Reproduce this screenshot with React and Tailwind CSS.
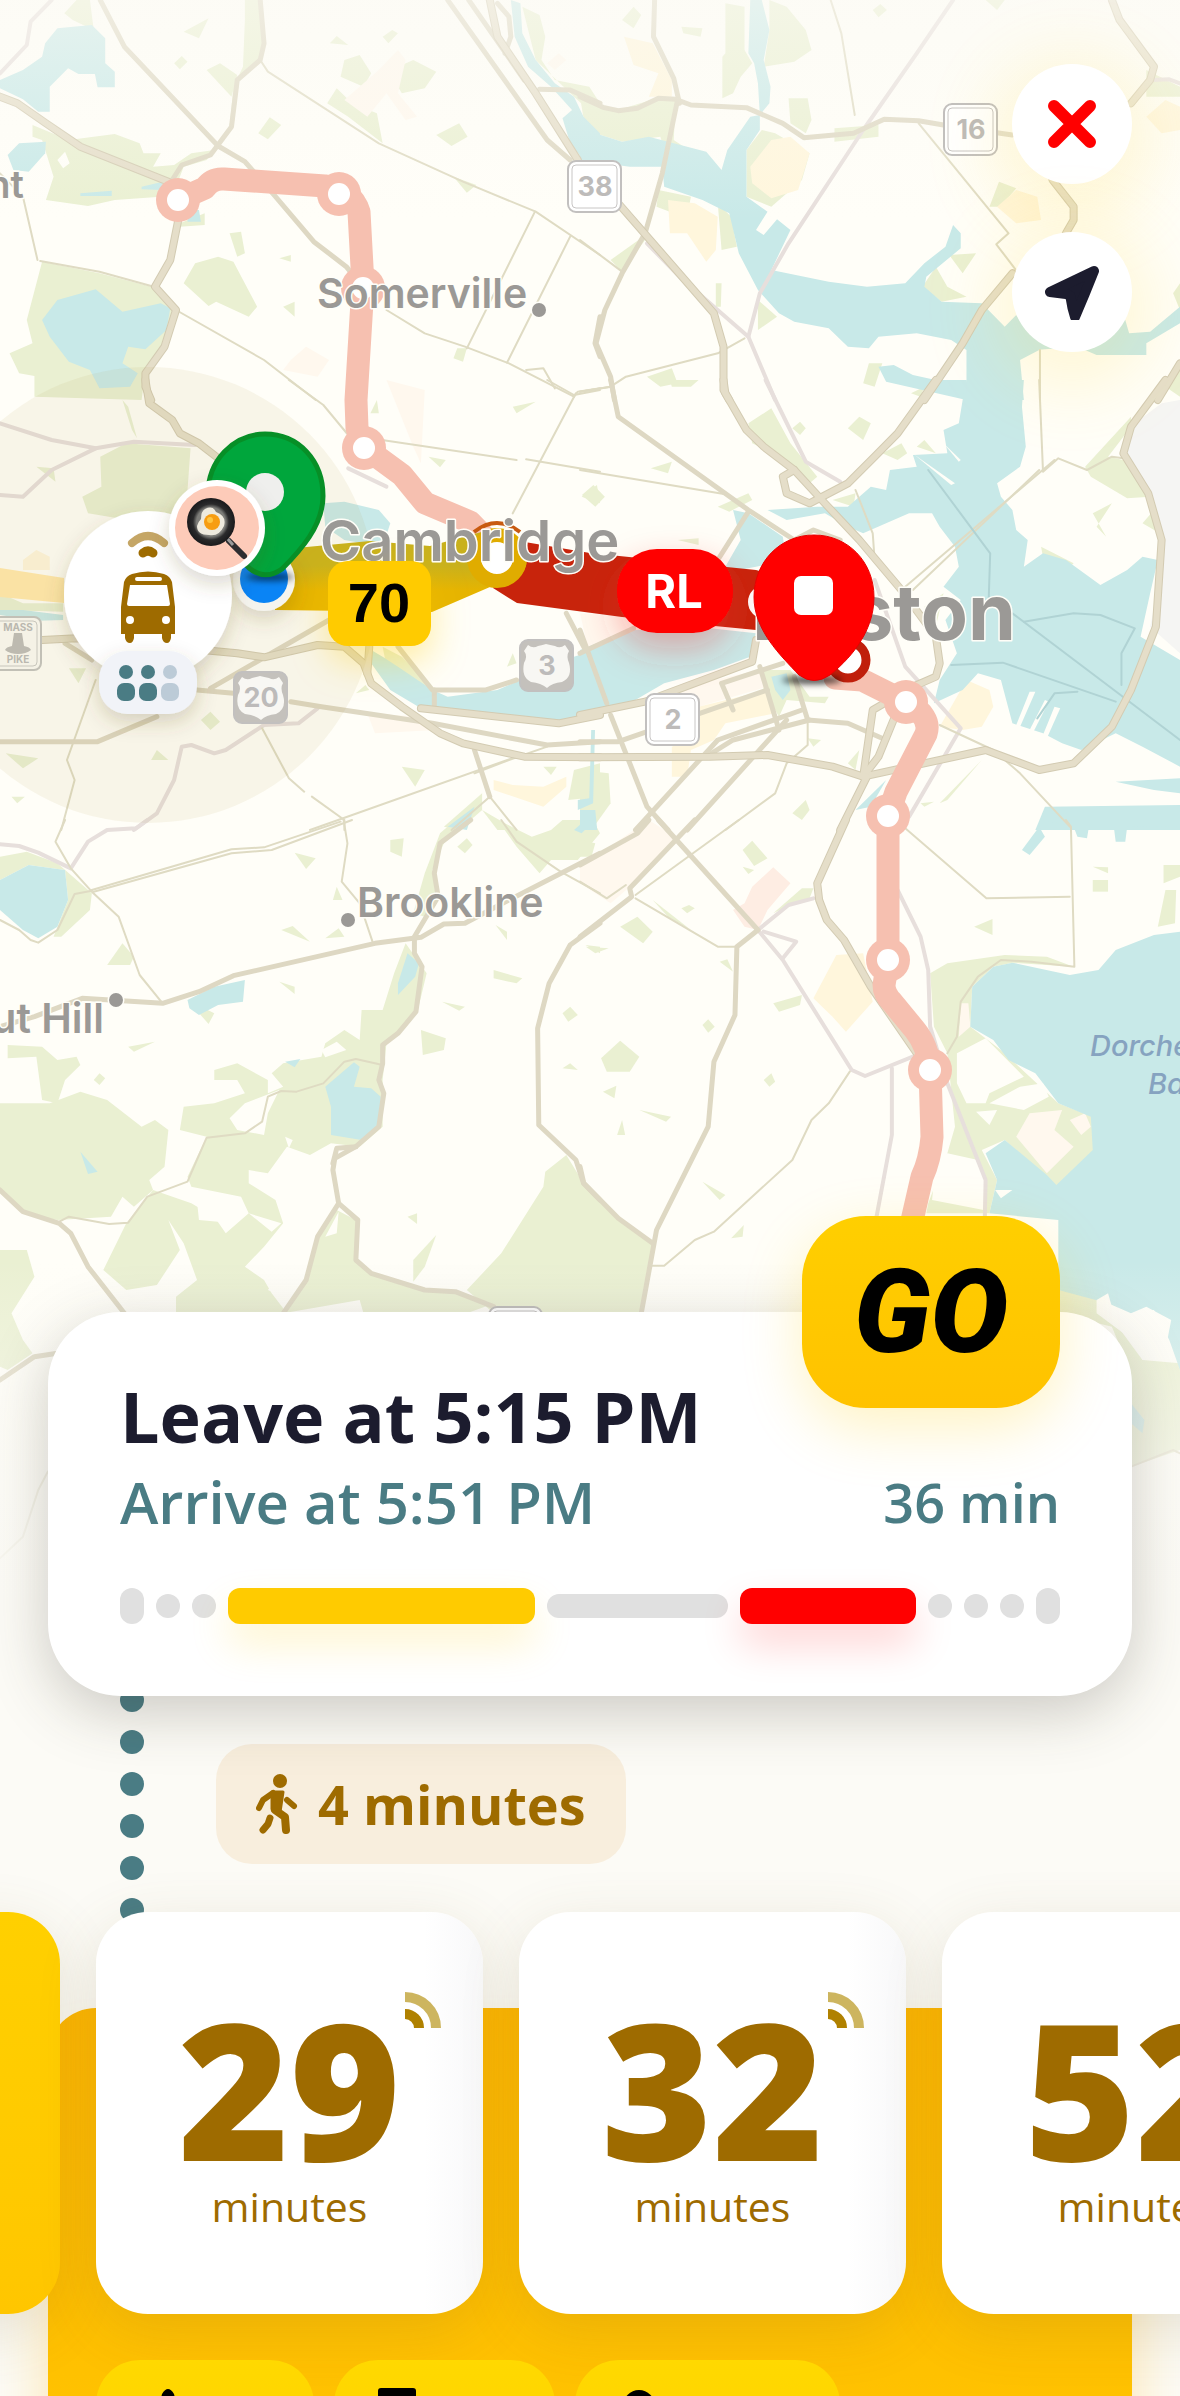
import React from "react";

// Map geometry, split in tiles. Every entry is a list of polygon / polyline points.
const tiles = [
  {
    x: 0,
    y: 0,
    green: [
      "168,40 200,0 235,0 245,90 190,60",
      "85,375 180,420 300,402 365,430 375,460 420,460 400,500 455,495 500,460 560,450 600,380 610,260 635,200 640,60 640,0 680,0 690,130 680,180 625,240 610,380 540,480 480,500 460,560 420,590 300,600 230,618 120,600 140,530 110,420 85,410",
      "480,95 545,55 520,115",
      "455,190 475,168 490,185 470,208",
      "540,210 575,190 620,225 605,290",
      "675,400 705,352 735,375 700,418",
      "855,310 880,265 920,310 985,340 1000,430 910,350",
      "890,230 900,180 940,165 970,220 950,260",
      "862,130 880,108 910,135",
      "1000,110 1025,90 1040,100 1015,130",
      "1035,250 1040,200 1080,180 1140,215 1110,265 1050,280",
      "1140,405 1200,370 1222,410 1180,438",
      "1185,530 1245,555 1220,578",
      "600,700 630,695 640,760 620,770",
      "480,850 510,790 570,770 610,785 672,920 650,950 565,905 545,918",
      "730,775 760,765 760,785",
      "740,920 770,905 770,950",
      "110,785 260,820 395,860 430,900 460,930 420,1060 380,1110 370,1200 90,1190 90,1128 50,1120 25,1060 85,1030 70,960",
      "1365,20 1410,45 1425,110 1415,180 1450,240 1540,260 1568,310 1568,360 1500,290 1400,180",
      "1185,1075 1195,1045 1220,1045 1210,1085",
      "470,670 535,640 535,675 470,680",
    ],
    water: [
      "118,130 150,85 240,75 275,115 275,190 300,215 300,262 255,262 248,222 205,222 178,205 130,260 130,335 100,335 60,298 0,265 0,240 60,210 110,170",
      "20,465 50,430 120,425 118,460 75,515 35,510",
      "110,960 150,900 250,868 320,935 420,910 445,925 435,990 380,1048 335,1040 320,1090 360,1120 340,1160 260,1165 235,1110 180,1085 130,1010",
      "1335,0 1360,10 1365,100 1400,180 1450,250 1500,290 1525,350 1568,400 1568,490 1525,480 1490,430 1470,355 1495,330 1440,260 1380,200 1345,110",
      "210,580 292,572 292,588 210,588",
      "370,560 425,545 425,570 370,568",
      "490,630 520,630 525,665 490,665",
    ],
    land: ["150,480 170,455 182,490 165,505"],
    peach: [
      "760,1080 800,1040 860,1080 830,1130 740,1110",
      "990,210 1040,150 1060,180 1040,280 1090,350 1060,360 1010,280 960,350 900,300",
      "1430,190 1460,160 1480,180 1450,210",
    ],
    major: [
      "0,290 45,310 120,370 210,440 440,545",
      "465,665 445,780 405,860 460,930 430,1040 380,1120 380,1160 395,1200",
      "1280,0 1300,110 1400,280 1510,480",
    ],
    minor: [
      "262,0 325,140 570,438 640,485 720,590 820,725 905,800 940,850",
      "680,0 690,130 680,180 620,240 605,380 550,465 475,495 450,540",
      "1170,0 1430,420 1490,480",
      "1225,0 1370,240",
      "1300,10 1330,50 1335,110 1320,160",
      "1410,268 1490,270 1568,310",
      "1568,950 1555,1030 1568,1070",
    ],
    thin: [
      "680,180 700,215 990,430 1210,545 1400,635 1568,765",
      "1398,635 1220,1045",
      "1490,710 1325,1088",
      "1010,930 1110,1000 1215,1040 1330,1090 1500,1190",
      "1375,1110 1420,1105 1450,1165",
      "460,930 690,1080 825,1200",
      "0,520 60,590 98,780",
      "105,783 260,815 395,858",
      "1568,1165 1510,1175 1500,1190",
    ],
    rail: ["135,0 80,65 70,135 0,220"],
  },
  {
    x: 580,
    y: 0,
    green: [
      "380,10 430,20 430,150 450,190 420,230 400,280 372,295 372,170 380,160",
      "0,290 60,320 100,330 200,295 250,300 245,420 350,500 215,430 210,410 110,425 40,400 10,360",
      "495,0 540,20 590,90 605,150 560,185 480,200 495,90",
      "435,590 435,450 475,390 510,400 600,460 580,540 500,620",
      "545,295 595,295 605,360 590,400 550,370",
      "110,60 140,20 160,45 140,85",
      "265,80 320,85 315,110 270,100",
      "1060,0 1110,0 1090,30",
      "765,30 785,12 802,30 780,52",
      "360,610 395,650 410,740 370,750",
      "205,570 290,590 270,700 245,640 200,620",
      "80,780 165,710 170,720 110,815",
      "1070,620 1095,545 1140,565 1100,620",
      "965,765 1035,760 1000,820",
      "895,860 930,800 960,860 1010,890 945,905",
      "175,1130 240,1105 255,1150 210,1160",
      "740,1150 755,1090 790,1090 770,1160",
      "465,900 515,950 465,990",
      "355,850 370,850 368,920 355,920",
      "665,385 780,375 780,410 665,425",
      "1480,210 1568,260 1568,290 1480,290",
      "1530,1160 1568,1110 1568,1190",
      "1550,880 1568,850 1568,930",
    ],
    water: [
      "0,340 40,400 110,425 180,410 330,455 370,510 385,450 445,350 470,345 465,250 455,190 440,160 445,0 475,0 495,90 480,180 498,260 495,310 470,345 470,390 435,450 435,590 490,635 460,690 480,705 515,658 550,690 500,810 650,845 750,860 850,850 900,790 955,740 975,675 995,700 995,745 905,830 900,860 945,905 1050,910 1110,980 1140,945 1200,1050 1150,1080 1160,1200 1010,1200 1010,1050 970,1020 880,1000 780,1010 755,1045 700,1040 650,985 560,965 520,940 465,870 415,760 390,640 320,600 220,560 215,500 130,500 0,480",
      "780,1100 820,1095 870,1125 1010,1160 1010,1200 800,1145",
      "1150,960 1425,960 1435,1000 1490,995 1568,920 1568,970 1480,1030 1480,1065 1350,1065 1300,1040 1190,1050",
    ],
    yellow: [
      "115,110 190,130 240,240 240,290 180,290 205,220 140,195",
      "450,550 445,500 500,420 550,410 600,460 570,570 500,595",
      "230,600 300,610 360,650 355,750 330,785 280,700 235,700",
      "1090,620 1140,570 1195,590 1205,660 1140,670",
      "1480,350 1530,300 1568,320 1568,390 1520,400",
    ],
    major: [
      "1390,0 1410,60 1500,200 1490,240 1440,310",
      "1235,540 1290,620 1290,660 1270,700",
      "1130,820 1050,930 1000,1030 900,1200",
      "100,610 350,940 375,1040 375,1170 390,1200",
      "1568,1090 1510,1200",
    ],
    minor: [
      "195,0 192,110 245,235 260,310",
      "0,290 60,322 100,332 150,325 205,295 250,298 290,315 435,323 530,370 585,413 715,400 795,358 885,362 950,375 1130,405",
      "255,300 215,520 170,700 110,820 65,930 42,1030 80,1130 90,1200",
    ],
    thin: [
      "655,0 683,100 718,345",
      "885,370 1120,700 1088,733 1138,808 1130,820",
      "0,720 110,815",
      "0,1175 80,1160 120,1130 360,1060 430,1015",
      "1202,1050 1202,1200",
    ],
    rail: [
      "975,0 880,160 740,390 545,730 470,880 440,1010 510,1200",
      "175,730 260,830 440,1010",
      "1495,240 1540,238 1568,250",
    ],
  },
  {
    x: 0,
    y: 380,
    green: [
      "262,230 330,190 498,205 490,330 440,440 230,400 215,350 265,320",
      "95,260 140,265 145,305",
      "320,60 335,80 358,175 345,150",
      "968,100 985,60 990,100",
      "1120,230 1165,240 1150,262",
      "1340,80 1400,65 1350,100",
      "1520,350 1560,315 1568,370",
      "180,865 225,865 205,910",
      "525,1020 550,995 575,1025 550,1050",
      "15,1120 100,1135 60,1165",
      "395,1140 410,1110 440,1140",
      "930,940 955,915 965,930",
      "1050,1160 1110,1170 1085,1220",
      "1420,1160 1455,1160 1440,1185",
      "1000,800 1050,830 1130,920 1120,960 1020,920",
      "1500,1170 1568,1150 1568,1250 1485,1260",
      "1160,1340 1260,1240 1260,1290 1200,1350",
      "1260,1290 1350,1350 1300,1350",
      "30,1250 65,1250 45,1270",
      "1325,860 1340,820 1350,850",
      "0,640 60,670 165,670 165,695 0,690",
    ],
    water: [
      "845,370 900,365 990,390 1020,430 1000,500 900,480 850,440",
      "970,810 1000,830 1040,860 1130,930 1170,950 1300,930 1420,870 1500,830 1568,805 1568,1000 1460,1025 1300,1010 1100,985 1020,930 970,850",
      "0,690 60,690 165,705 165,720 100,722 0,705",
      "1545,1050 1555,1050 1550,1270 1510,1290 1510,1260 1540,1255",
      "1170,1340 1240,1280 1220,1350",
    ],
    yellow: [
      "60,540 95,510 130,530 130,570 60,570",
      "1290,1200 1340,1215 1420,1220 1480,1190 1480,1220 1420,1280 1290,1230",
    ],
    peach: [
      "0,740 50,745 60,780 0,790",
      "960,1000 1100,1010 1140,1050 980,1060",
      "1080,200 1010,0 1110,30 1100,250",
    ],
    major: [
      "380,0 390,70 450,120 470,160 520,190 565,230",
      "110,780 200,775 620,820 690,832 830,795 900,800 950,850 970,910 1050,980 1150,1060 1210,1090 1370,1130 1568,1132",
      "965,800 960,880",
      "1100,985 1460,1030 1568,1005",
    ],
    minor: [
      "0,1085 255,1085 410,1010",
      "515,930 610,940",
      "760,965 840,980 1130,1030 1430,1095 1568,1085",
      "550,925 860,720",
      "170,790 240,840",
      "1040,800 1130,930 1270,930 1350,900",
      "1135,930 1135,990",
      "1240,1110 1280,1250",
      "1480,700 1530,810",
    ],
    thin: [
      "250,900 175,1140 195,1200 160,1350",
      "685,1045 755,1195 795,1235",
      "1350,1130 810,1350",
      "815,1250 900,1320 900,1350",
      "1430,1100 1330,1140 1240,1180",
      "755,0 845,75 910,165 1350,240",
      "1375,238 1568,275",
      "1505,40 1340,400",
      "1430,0 1500,45 1568,30",
      "1280,1250 1180,1350",
      "1280,1250 1350,1350",
    ],
    rail: [
      "0,130 135,180 250,205 350,185 510,195",
      "250,205 135,270 60,350 0,345",
      "830,985 780,1030 690,1035 590,1110 560,1120 500,1095 475,1100 455,1200 410,1300 350,1350",
      "910,265 1010,320",
    ],
  },
  {
    x: 580,
    y: 380,
    green: [
      "440,130 500,85 550,190 620,290 600,310 540,240 450,190",
      "555,145 575,125 590,145 575,165",
      "700,145 730,110 760,130 740,180",
      "790,220 840,190 855,220 830,240",
      "880,200 900,180 930,220",
      "865,40 900,20 890,50",
      "185,265 240,245 230,280",
      "5,345 35,315 65,350 40,380",
      "360,380 440,340 450,360 390,395",
      "255,480 310,475 310,495",
      "1205,500 1290,550 1280,560 1210,530",
      "1320,260 1440,110 1440,140 1380,230 1420,240 1490,350 1430,355 1335,290",
      "1340,400 1390,370 1350,440 1375,470",
      "1470,430 1500,390 1515,460",
      "470,870 550,870 600,950 650,950 640,970 540,960 520,1010 480,930",
      "940,1270 1050,1140 960,1260",
      "555,1300 590,1260 600,1290 580,1320",
      "595,1075 630,1080 610,1100",
      "30,725 60,750 40,760",
      "890,1270 925,1265 900,1280",
      "0,1170 75,1180 80,1270 30,1350 0,1330",
      "660,360 720,340 715,380",
      "235,0 310,0 290,20 240,20",
      "900,680 950,640 930,740",
      "700,1150 730,1110 720,1170",
    ],
    water: [
      "1010,0 1160,0 1155,80 1165,200 1150,260 1090,310 1100,350 1130,390 1140,450 1170,480 1160,560 1210,520 1270,540 1360,615 1430,570 1470,530 1510,540 1490,640 1465,770 1568,840 1568,1160 1470,1100 1400,1060 1310,1110 1260,1090 1210,1060 1130,1030 1100,900 1040,880 1000,930 925,970 940,900 985,820 955,720 995,660 950,620 990,560 980,500 940,440 920,400 860,400 800,430 740,460 700,440 640,400 540,420 490,390 620,380 700,380 760,320 800,330 810,270 880,260 870,225 960,220 950,150 990,130 1000,60",
      "400,390 440,400 530,470 540,540 460,560 370,580 420,480",
      "0,810 130,750 340,745 460,760 445,830 350,870 220,910 130,970 0,990",
      "500,890 540,880 550,930 530,960 510,930",
      "1400,1205 1568,1195 1568,1240 1500,1230",
      "1215,1280 1568,1275 1568,1350 1190,1350",
      "870,0 1010,0 1010,40 950,20",
      "720,1290 800,1200 760,1280",
      "0,1290 40,1290 45,1350 0,1350",
    ],
    land: [
      "1175,935 1190,935 1150,1040 1140,1035",
      "1215,960 1225,965 1185,1055 1175,1050",
      "1240,980 1255,985 1220,1075 1208,1070",
      "875,225 980,310 970,315",
      "950,190 995,240 990,245",
      "820,450 840,430 855,450 840,478",
    ],
    yellow: [
      "310,980 490,930 510,1000 380,1030 350,1080 290,1110 280,1190 240,1190 240,1100 300,1070",
      "940,1040 1010,900 1070,930 1080,980 1050,1040 1000,1050",
    ],
    peach: ["0,700 120,710 180,740 20,800", "230,930 470,870 490,920 310,980"],
    concrete: [
      "1568,60 1520,70 1450,130 1430,220 1490,330 1520,470 1520,580 1490,740 1568,820",
    ],
    major: [
      "375,0 380,40 435,150 480,200 560,270 640,370 730,480 840,630 930,770 940,850 930,890 870,920 765,990 740,1190",
      "930,0 830,160 770,230 700,310 600,370 540,340 530,290 560,270",
      "1530,0 1440,140 1420,220 1485,340 1520,480 1505,740 1440,930 1390,1040 1290,1150 1200,1170 1060,1110 740,1190 660,1160 490,1125 340,1130 0,1132",
      "830,990 780,1130 740,1190",
      "750,1190 680,1350",
      "0,1005 170,965 450,845 460,780",
    ],
    minor: [
      "80,0 100,110 440,390 560,480 610,450 680,480",
      "440,395 360,540",
      "0,1085 100,1085 490,930",
      "80,1005 175,1280 230,1350",
      "145,1350 360,1080 580,990",
      "280,1350 540,1020",
      "400,990 370,910 530,850",
      "470,860 520,1050",
      "560,890 595,1020 700,1030 800,1080",
      "330,1130 400,1080 600,1020",
      "0,820 140,745",
      "0,750 70,970",
    ],
    thin: [
      "0,270 380,343",
      "1200,0 1210,275 1250,235 1325,270 1390,230 1420,235",
      "850,620 1240,240",
      "870,630 1200,270",
      "595,1030 595,1095 540,1150 510,1240 380,1350",
      "1080,1110 1150,1180 1280,1340",
      "720,330 765,460 770,540",
      "940,1035 1080,1110",
      "0,35 80,20",
    ],
    ferry: [
      "910,270 1072,520 1068,660",
      "1130,700 1430,960 1568,1080",
      "970,855 1105,848 1400,965",
      "1160,725 1290,700 1360,705 1450,745 1415,820 1415,915",
      "1300,935 1240,940 1195,1015",
    ],
    rail: [
      "485,0 590,245 680,305",
      "770,600 850,860 995,1045 860,1310",
    ],
  },
  {
    x: 0,
    y: 820,
    green: [
      "0,110 70,95 150,130 240,220 235,270 160,350 140,350 178,240 170,150 75,135 0,180",
      "280,435 320,370 350,410 340,435",
      "1150,40 1190,0 1230,0 1160,70 1130,150 1140,240 1110,290 1080,280 1110,160",
      "1020,60 1055,55 1050,110 1020,95",
      "770,98 825,115 800,147",
      "870,240 880,200 895,240",
      "735,330 765,318 810,365",
      "850,355 885,325 900,350",
      "730,485 770,500 770,522",
      "490,540 560,580 545,612",
      "1060,370 1115,460 1090,580 1010,670 1000,780 1000,920 940,980 865,970 810,1005 750,980 700,1060 650,1050 650,1090 720,1140 740,1210 690,1280 640,1340 690,1380 710,1420 750,1480 460,1480 460,1430 515,1380 480,1270 440,1200 470,1290 410,1395 330,1410 270,1350 330,1210 400,1110 500,1150 560,1190 590,1240 650,1180 630,1130 500,1100 490,1070 540,950 470,930 480,860 560,850 640,820 620,780 560,780 560,750 620,730 700,780 700,820 740,800 710,760 740,730 840,710 850,670 900,630 940,660 945,570 1000,570 1030,460",
      "0,850 130,850 210,815 280,840 370,920 405,900 440,930 430,1040 390,1080 400,1110 350,1160 320,1130 290,1190 150,1200 60,1180 0,1110",
      "20,675 110,680 150,720 200,710 210,735 170,780 150,850 110,840 95,710 20,715",
      "245,780 260,760 275,775 260,795",
      "335,680 405,665 350,695",
      "1290,450 1365,475 1350,490 1290,475",
      "1155,545 1215,560 1200,572",
      "1100,630 1165,655 1160,690 1105,705",
      "1295,315 1325,335 1325,360",
      "1195,80 1220,55 1235,75 1215,100",
      "1065,1190 1090,1180 1090,1212",
      "1080,1385 1080,1320 1140,1245 1110,1340",
      "1220,1410 1310,1300 1420,1100 1425,1055 1480,1005 1520,1080 1568,1140 1568,1480 1290,1480",
      "880,1170 930,1200 930,1320 970,1360 1110,1410 1190,1415 1280,1455 1220,1480 950,1480 940,1440 740,1480 800,1380 830,1250",
      "1300,0 1390,50 1440,30 1470,0 1550,0 1568,40 1510,120 1440,120 1410,160 1350,80",
      "0,1290 70,1290 90,1370 30,1480 60,1560 85,1600 20,1650 0,1640",
      "1470,580 1490,560 1510,585 1485,605",
      "1470,745 1490,730 1510,750",
      "1530,375 1568,380 1568,400",
    ],
    water: [
      "0,180 75,135 170,150 178,240 150,320 100,355 60,330 0,270",
      "490,540 560,500 640,480 635,545 570,555 520,585 495,565",
      "1065,400 1095,430 1085,470 1040,525 1040,490",
      "745,725 785,717 770,742",
      "850,800 925,727 940,740 925,800 970,805 995,830 990,920 945,960 865,945 865,860",
      "210,995 255,1055 230,1062",
      "1500,30 1530,0 1550,5 1520,40",
    ],
    land: [
      "640,850 730,810 700,880 690,945 620,930 600,895",
      "515,1145 560,1140 590,1170 570,1205 520,1200",
      "840,690 880,665 905,690 850,712",
      "700,1410 740,1350 775,1375 740,1430",
      "850,1250 885,1175 880,1240",
      "650,1180 735,1210 710,1235",
      "745,950 765,960 755,985",
    ],
    minor: [
      "0,1110 60,1175 155,1210 185,1240 230,1340 325,1480",
      "0,620 90,590 215,535 425,550 520,515 610,467 980,370 1100,352 1160,312 1215,310 1330,240 1568,100",
      "1230,0 1150,70 1135,160 1145,230 1083,350 1083,400 1103,440 1087,575 1040,640 1000,675 1000,730 990,780 1003,820 990,920 930,980 875,1015 870,1050 885,1150 830,1250 800,1380 740,1480",
      "930,980 880,985 870,1030",
      "885,1150 935,1200 930,1320 970,1360 1110,1410 1190,1415 1290,1460",
      "1568,310 1490,375 1435,490 1405,625 1408,915 1505,1020 1525,1090 1568,1140",
      "0,1680 90,1610 150,1600",
    ],
    thin: [
      "170,0 145,65 185,145 240,215 310,290 365,465 425,550",
      "245,215 605,100 710,90 920,0",
      "240,210 605,88 690,82 890,5",
      "898,0 908,70 893,185 940,250 975,370",
      "0,300 50,330 80,360 100,368 150,330 195,222 240,212",
      "155,1205 180,1190 285,1212 335,1208 385,1130 490,1085 540,953 640,940 685,905 700,830 735,813 775,815 845,790 900,725 930,717 1000,735",
      "1310,0 1350,65 1465,155 1568,220",
      "125,1955 100,2010 60,2150 0,2215",
    ],
    rail: ["0,73 50,78 100,98 185,145 230,65 280,30 355,25 385,0"],
  },
  {
    x: 580,
    y: 820,
    green: [
      "915,460 960,430 1110,405 1220,410 1290,440 1130,428 1080,440 1025,500 1020,620 1100,690 1250,850 1340,890 1345,990 1245,1100 1110,960 1050,990 1090,1080 1070,1180 905,1180 910,1150 960,1000 980,920 960,700 925,620",
      "425,90 450,62 490,115 455,138",
      "425,140 455,150 440,162",
      "165,120 190,90 215,110 175,145",
      "505,280 580,205 610,205 600,235 540,260",
      "190,240 290,330 230,290",
      "265,265 285,255 300,265 280,280",
      "105,320 150,290 190,335 165,370",
      "15,380 75,385 40,400",
      "365,425 385,418 400,455",
      "505,550 580,525 575,555 520,575",
      "320,615 335,598 352,620 335,638",
      "55,715 105,662 155,710 130,755 70,755",
      "60,815 95,797 90,835",
      "155,870 238,890 225,905",
      "97,945 110,900 118,945",
      "320,1085 380,1125 365,1140",
      "395,1255 428,1215 425,1250",
      "480,780 500,760 510,785 495,800",
      "1030,320 1078,297 1078,345",
      "1340,180 1380,180 1380,215 1340,215",
      "1340,140 1380,142 1380,160",
      "1525,135 1568,135 1568,170 1525,190",
      "1530,210 1558,210 1555,310 1510,320",
      "0,1080 100,1200 190,1275 160,1480 0,1480",
      "0,60 40,70 30,110 0,110",
      "1250,1410 1340,1420 1380,1480 1470,1620 1568,1630 1568,1890 1440,1940 1440,1660 1390,1520 1250,1480",
    ],
    water: [
      "1025,500 1080,440 1130,428 1280,465 1355,450 1400,390 1500,345 1568,335 1568,1650 1540,1560 1500,1470 1440,1480 1380,1450 1250,1410 1250,1200 1070,1180 1090,1080 1060,1000 1110,960 1220,1065 1245,1095 1340,990 1335,890 1250,850 1190,760 1120,720 1080,660 1020,620",
      "1155,90 1200,20 1215,50 1175,105",
      "1210,0 1568,0 1568,18 1430,20 1425,65 1400,65 1395,20 1330,20 1325,55 1300,50 1290,20",
      "1440,1750 1475,1800 1470,1840 1440,1810",
    ],
    land: [
      "985,700 1060,655 1160,770 1070,820 1060,850 1010,850 985,790",
      "1070,850 1150,800 1210,790 1225,830 1160,870",
      "930,1030 960,1000 1040,1020 1060,1080 1055,1170 920,1140",
      "1035,875 1090,870 1070,915",
      "1085,1110 1130,1110 1100,1135",
      "1440,1480 1480,1460 1545,1500 1530,1590 1470,1620 1440,1550",
      "1350,1440 1380,1420 1390,1460 1420,1540 1350,1480",
    ],
    yellow: ["610,535 670,405 740,400 765,545 695,635 660,590"],
    peach: [
      "1175,880 1260,870 1240,930 1290,980 1220,1060 1140,950",
      "1280,900 1320,880 1335,920 1310,945",
      "0,140 180,0 260,60 130,200 80,250 0,190",
      "995,550 1015,550 1020,620 990,650",
    ],
    pink: ["400,270 430,250 450,200 505,142 550,190 490,270 465,330 430,320"],
    major: ["695,0 620,190 625,240 645,300 690,360 760,500 880,700"],
    minor: [
      "180,0 150,40 0,135",
      "300,0 130,205 135,230 0,350",
      "205,0 465,330 410,380 405,585 350,725 335,920 200,1230 160,1480",
      "0,1040 10,1090 100,1195 190,1270",
    ],
    thin: [
      "415,0 145,225",
      "0,185 70,235 120,195",
      "145,235 360,380 410,380",
      "705,755 650,850 605,900 555,1020 350,1235 300,1260 220,1337 190,1337",
      "850,25 1062,235 1280,230",
      "1270,0 1283,20 1292,440 1180,425 1100,420 1040,470 995,545 985,650 960,700",
      "1440,1940 1550,1890 1568,1900",
    ],
    rail: [
      "610,235 545,255 465,330 530,420 710,750 745,768 870,710",
      "480,335 565,365 530,415",
      "815,745 815,945 775,1190",
      "830,210 890,350 910,450 915,620 960,790 1060,1080 1058,1190",
    ],
  },
];

const areas = [
  ["green", "#eaf0d2"],
  ["peach", "#fff8ee"],
  ["pink", "#feede3"],
  ["yellow", "#fff6dc"],
  ["concrete", "#f5f5f3"],
  ["water", "#c8e9e8"],
  ["land", "#fffef8"],
];

const lines = [
  ["rail", "#e7dfdc", 4],
  ["thin", "#dfdbc3", 2],
  ["ferry", "#b0d3d4", 2],
  ["minor", "#ded8c3", 5],
  ["major", "#d3cbb2", 8],
  ["major", "#e5dec9", 6],
];

const stops = [
  [178, 200],
  [339, 194],
  [363, 288],
  [364, 448],
  [906, 702],
  [888, 816],
  [888, 960],
  [930, 1070],
];

function Shield({ x, y, label, us }) {
  return (
    <g>
      <rect x={x + 1} y={y + 1} width="53" height="51" rx="8" fill={us ? "#c4c1bc" : "#fff"} stroke="#c2c0bf" strokeWidth="2" />
      {us ? (
        <path
          transform={`translate(${x} ${y})`}
          d="M9 6q5 4 10 1q5-1 8-2q4 1 9 2q5 3 10-1l4 6q-3 5 0 12q4 14-7 19q-10 1-15 6q-6-5-16-6q-10-5-7-19q4-7 0-12z"
          fill="#f8f7f3"
        />
      ) : (
        <rect x={x + 5} y={y + 5} width="45" height="43" rx="4" fill="#fff" stroke="#c8c6c5" strokeWidth="1" />
      )}
      <text x={x + 28} y={y + 36} textAnchor="middle" fontSize="27" fontWeight="700" fill="#bdbbba">
        {label}
      </text>
    </g>
  );
}

function TransitMap() {
  return (
    <svg viewBox="0 0 1180 1600" className="block h-auto w-full bg-[#fffef8] font-[Inter,sans-serif]">
      <defs>
        <linearGradient id="fade" x1="0" y1="0" x2="0" y2="1">
          <stop offset="0" stopColor="#fcfbf6" stopOpacity="0" />
          <stop offset="1" stopColor="#fcfbf6" />
        </linearGradient>
        <linearGradient id="topFade" x1="0" y1="0" x2="0" y2="1">
          <stop offset="0" stopColor="#fbfaf4" stopOpacity="0.6" />
          <stop offset="1" stopColor="#fbfaf4" stopOpacity="0" />
        </linearGradient>
        <radialGradient id="pan">
          <stop offset="0.6" stopColor="#7d7d79" />
          <stop offset="0.75" stopColor="#2a2a2b" />
          <stop offset="1" stopColor="#1a1a1c" />
        </radialGradient>
        <linearGradient id="yellowRoute" x1="0" y1="0" x2="0" y2="1">
          <stop offset="0.45" stopColor="#c9b11c" />
          <stop offset="0.75" stopColor="#e6b400" />
        </linearGradient>
        <filter id="soft" x="-60%" y="-60%" width="220%" height="240%">
          <feDropShadow dx="0" dy="8" stdDeviation="10" floodColor="#5b4d20" floodOpacity="0.22" />
        </filter>
        <filter id="glowYellow" x="-60%" y="-60%" width="220%" height="260%">
          <feDropShadow dx="0" dy="16" stdDeviation="18" floodColor="#ffcb00" floodOpacity="0.35" />
        </filter>
        <filter id="glowRed" x="-60%" y="-60%" width="220%" height="260%">
          <feDropShadow dx="0" dy="16" stdDeviation="18" floodColor="#e33" floodOpacity="0.35" />
        </filter>
        <filter id="blur" x="-50%" y="-100%" width="200%" height="300%">
          <feGaussianBlur stdDeviation="3" />
        </filter>
      </defs>

      {areas.map(([kind, fill]) =>
        tiles.map((tile) => (
          <g key={`${kind}-${tile.x}-${tile.y}`} transform={`translate(${tile.x} ${tile.y}) scale(0.38265 0.33333)`} fill={fill}>
            {(tile[kind] || []).map((points) => (
              <polygon key={points} points={points} />
            ))}
          </g>
        ))
      )}
      {lines.map(([kind, stroke, width]) =>
        tiles.map((tile) => (
          <g
            key={`${kind}-${width}-${tile.x}-${tile.y}`}
            transform={`translate(${tile.x} ${tile.y}) scale(0.38265 0.33333)`}
            fill="none"
            stroke={stroke}
            strokeWidth={width}
            strokeLinejoin="round"
            strokeLinecap="round"
          >
            {(tile[kind] || []).map((points) => (
              <polyline key={points} points={points} vectorEffect="non-scaling-stroke" />
            ))}
          </g>
        ))
      )}

      <rect width="1180" height="220" fill="url(#topFade)" />
      <rect y="1260" width="1180" height="340" fill="url(#fade)" />
      <circle cx="148" cy="595" r="228" fill="#b29a50" fillOpacity="0.09" />

      {/* road signs */}
      <Shield x={567} y={160} label="38" />
      <Shield x={943} y={103} label="16" />
      <Shield x={645} y={693} label="2" />
      <Shield x={233} y={671} label="20" us />
      <Shield x={519} y={639} label="3" us />
      <Shield x={488} y={1306} label="" />
      <g>
        <rect x="-6" y="617" width="47" height="53" rx="7" fill="#f5f2e6" stroke="#c2c0b6" strokeWidth="2" />
        <rect x="-6" y="621" width="43" height="45" rx="4" fill="none" stroke="#c8c6bc" />
        <path d="M14 633h8l2 13q6 1 7 4q-5 4-13 4t-13-4q1-3 7-4z" fill="#bdbab0" />
        <text x="18" y="631" textAnchor="middle" fontSize="10" fontWeight="700" fill="#bab8af">MASS</text>
        <text x="18" y="663" textAnchor="middle" fontSize="10" fontWeight="700" fill="#bab8af">PIKE</text>
      </g>

      {/* rest of the red line */}
      <g fill="none" stroke="#f6c0b0" strokeWidth="23" strokeLinejoin="round" strokeLinecap="round">
        <path d="M178 200L205 188Q212 178 224 179L325 186Q352 190 359 212L363 285L356 400L357 428Q360 442 372 453L402 475L425 503L470 522L497 550" />
        <path d="M835 678L862 680L906 702Q932 716 926 734L896 792L888 816V960L884 985Q884 994 892 1002L915 1030Q928 1046 930 1070L932 1137Q930 1160 922 1177L911 1225" />
      </g>
      {stops.map(([cx, cy]) => (
        <g key={`${cx}-${cy}`}>
          <circle cx={cx} cy={cy} r="22" fill="#f6c0b0" />
          <circle cx={cx} cy={cy} r="11" fill="#fff" />
        </g>
      ))}

      {/* active legs */}
      <path d="M0 568L64 578V603L0 597Z" fill="#fae2a4" />
      <path d="M513 540L590 553L756 570L790 580V634L756 630L622 617L517 603L493 588Z" fill="#c8240c" />
      <circle cx="765" cy="602" r="17" fill="#fff" />
      <circle cx="848" cy="660" r="18" fill="#fff" stroke="#c01f0b" strokeWidth="9" />
      <path d="M275 550L370 541L430 546L470 535L497 528Q530 535 526 566Q516 590 490 587L432 612L275 610Z" fill="url(#yellowRoute)" />
      <circle cx="497" cy="558" r="23" fill="#fff" stroke="#e0ac00" strokeWidth="14" />
      <path d="M474 532Q497 514 520 532" fill="none" stroke="#c85a10" strokeWidth="4" />

      {/* place names */}
      <g fill="#9b9996" stroke="#fffef8" strokeWidth="3" strokeLinejoin="round" paintOrder="stroke">
        <text x="317" y="308" fontSize="41" fontWeight="600">Somerville</text>
        <text x="320" y="561" fontSize="56" fontWeight="600">Cambridge</text>
        <text x="752" y="640" fontSize="77" fontWeight="700">Boston</text>
        <text x="357" y="917" fontSize="41" fontWeight="600">Brookline</text>
        <text x="104" y="1033" fontSize="41" fontWeight="600" textAnchor="end">Chestnut Hill</text>
        <text x="24" y="198" fontSize="38" fontWeight="600" textAnchor="end">Belmont</text>
        <circle cx="539" cy="310" r="7" />
        <circle cx="348" cy="920" r="7" />
        <circle cx="116" cy="1000" r="7" />
      </g>
      <g fill="#86a3c0" fontSize="29" fontWeight="500" fontStyle="italic">
        <text x="1090" y="1056">Dorchester</text>
        <text x="1148" y="1094">Bay</text>
      </g>

      {/* line badges */}
      <g filter="url(#glowYellow)">
        <rect x="328" y="561" width="103" height="85" rx="20" fill="#ffcb00" />
        <text x="379" y="622" textAnchor="middle" fontSize="56" fontWeight="700" className="font-['Liberation_Sans',sans-serif]">70</text>
      </g>
      <g filter="url(#glowRed)">
        <rect x="617" y="549" width="116" height="84" rx="40" fill="#f00" />
        <text x="674" y="608" textAnchor="middle" fontSize="47" fontWeight="700" fill="#fff">RL</text>
      </g>

      {/* destination */}
      <ellipse cx="812" cy="680" rx="30" ry="4" fill="#000" fillOpacity="0.7" filter="url(#blur)" />
      <path d="M814 535C848 535 874 562 874 597C874 635 846 662 830 675Q814 686 799 675C780 655 754 630 754 597C754 562 780 535 814 535Z" fill="#f00" stroke="#e80000" strokeWidth="1" />
      <rect x="794" y="576" width="39" height="39" rx="7" fill="#fff" />

      {/* origin */}
      <circle cx="264" cy="580" r="31" fill="#f5f4ee" filter="url(#soft)" />
      <circle cx="264" cy="579" r="24" fill="#0a84f5" />
      <ellipse cx="270" cy="577" rx="24" ry="4" fill="#000" fillOpacity="0.55" filter="url(#blur)" />
      <path d="M265 434C299 434 323 461 323 496C323 526 300 551 282 569Q265 581 249 568C232 551 208 528 208 494C208 461 233 434 265 434Z" fill="#00a63c" stroke="#078f27" strokeWidth="5" />
      <circle cx="265" cy="492" r="19" fill="#efefed" />

      {/* live vehicle */}
      <circle cx="148" cy="595" r="84" fill="#fff" filter="url(#soft)" />
      <g fill="none" stroke="#9e6b00" strokeLinecap="round">
        <path d="M132 543Q148 529 164 543" strokeWidth="8" strokeOpacity="0.6" />
        <path d="M143 553Q148 549 153 553" strokeWidth="9" />
      </g>
      <path
        fillRule="evenodd"
        fill="#9e6b00"
        d="M121 607L124 582Q126 576 132 574Q148 569 164 574Q170 576 172 582L175 607V634H171V638Q170 643 167 643Q163 643 162 638V634H134V638Q133 643 130 643Q126 643 125 638V634H121ZM137 577Q135 577 135 579T137 581H160Q162 581 162 579T160 577ZM130 585L127 604Q127 606 129 606H168Q170 606 170 604L167 585ZM130 616a4 4 0 1 0 0 8a4 4 0 1 0 0-8zM166 616a4 4 0 1 0 0 8a4 4 0 1 0 0-8z"
      />
      <rect x="99" y="651" width="98" height="63" rx="28" fill="#f1f3f8" filter="url(#soft)" />
      {[126, 148, 170].map((cx, i) => (
        <g key={cx} fill={i < 2 ? "#4a7c84" : "#bccbd7"}>
          <circle cx={cx} cy="672" r="7" />
          <rect x={cx - 9} y="683" width="18" height="18" rx="7" />
        </g>
      ))}

      {/* rider avatar */}
      <circle cx="217" cy="528" r="48" fill="#fff" filter="url(#soft)" />
      <circle cx="217" cy="528" r="42" fill="#fdcbb9" />
      <path d="M229 541L244 556" stroke="#2e2d30" strokeWidth="6" strokeLinecap="round" />
      <path d="M227 538L233 545" stroke="#9a9a9a" strokeWidth="3" />
      <circle cx="211" cy="522" r="24" fill="url(#pan)" />
      <path d="M205 509q8-4 11 3q11 4 8 14q-5 11-15 9q-12 0-12-9q1-4 4-7q0-8 4-10z" fill="#eeeade" />
      <circle cx="212" cy="522" r="8" fill="#f79d12" />
      <circle cx="210" cy="520" r="3" fill="#ffc540" />
    </svg>
  );
}

function SignalIcon() {
  return (
    <svg viewBox="0 0 36 36" className="absolute -top-1 left-full ml-1 size-9" fill="none" strokeWidth="10" aria-hidden="true">
      <path d="M0 5A31 31 0 0 1 31 36" stroke="#cdb55f" />
      <path d="M0 22A14 14 0 0 1 14 36" stroke="#b08100" />
    </svg>
  );
}

function DepartureCard({ minutes, live }) {
  return (
    <button
      type="button"
      className="flex w-[387px] shrink-0 flex-col items-center rounded-[52px] bg-linear-to-r from-white from-85% to-[#f8f8f9] pt-[84px] pb-[82px] text-[#9e6b00] shadow-[0_16px_60px_rgba(120,100,50,0.16)]"
    >
      <span className="relative text-[190px] leading-[184px] font-extrabold">
        {minutes}
        {live && <SignalIcon />}
      </span>
      <span className="text-[41px] leading-[52px]">minutes</span>
    </button>
  );
}

const Dot = () => <span className="size-6 rounded-full bg-[#e0e0e0]" />;
const Cap = () => <span className="h-9 w-6 rounded-full bg-[#e0e0e0]" />;

const App = () => {
  return (
    <main className="h-screen overflow-hidden bg-[#fcfbf6] font-['Open_Sans',sans-serif]">
      <section className="relative">
        <TransitMap />
        <div className="absolute top-16 right-12 flex flex-col gap-12">
          <button
            type="button"
            aria-label="Close"
            className="flex size-30 items-center justify-center rounded-full bg-white shadow-[0_16px_70px_20px_rgba(255,214,60,0.18)]"
          >
            <svg viewBox="0 0 48 48" className="size-12" stroke="#f00" strokeWidth="12" strokeLinecap="round">
              <path d="M6 6L42 42M42 6L6 42" />
            </svg>
          </button>
          <button
            type="button"
            aria-label="My location"
            className="flex size-30 items-center justify-center rounded-full bg-white shadow-[0_16px_70px_20px_rgba(255,214,60,0.18)]"
          >
            <svg viewBox="0 0 56 56" className="size-14" fill="#1c1c2e" stroke="#1c1c2e" strokeWidth="10" strokeLinejoin="round">
              <path d="M50 7L6 28Q14 29 22 30Q27 31 27 36Q28 44 31 53Q41 30 50 7Z" />
            </svg>
          </button>
        </div>
      </section>

      {/* trip summary */}
      <section className="relative z-10 mx-12 -mt-72 rounded-[72px] bg-white px-18 pt-15 pb-18 shadow-[0_16px_60px_rgba(60,55,45,0.25)]">
        <button
          type="button"
          className="absolute -top-24 right-18 flex h-48 w-[258px] items-center justify-center rounded-[64px] bg-linear-to-b from-[#ffcf00] to-[#ffc200] font-[Roboto,sans-serif] text-[116px] leading-none font-black italic text-black shadow-[0_20px_60px_rgba(255,203,0,0.24)]"
        >
          GO
        </button>
        <h1 className="text-[70px] leading-[88px] font-bold text-[#1c1c2e]">Leave at 5:15 PM</h1>
        <div className="flex items-center justify-between leading-[84px] font-semibold text-[#4a7c84]">
          <p className="text-[58px]">Arrive at 5:51 PM</p>
          <p className="text-[54px]">36 min</p>
        </div>
        <div className="mt-11 flex items-center gap-3">
          <Cap />
          <Dot />
          <Dot />
          <span className="h-9 flex-[306] rounded-xl bg-[#ffcb00] shadow-[0_20px_40px_rgba(255,203,0,0.2)]" />
          <span className="h-6 flex-[181] rounded-full bg-[#e0e0e0]" />
          <span className="h-9 flex-[175] rounded-xl bg-[#f00] shadow-[0_20px_40px_rgba(255,0,0,0.18)]" />
          <Dot />
          <Dot />
          <Dot />
          <Cap />
        </div>
      </section>

      {/* walk to the stop */}
      <section className="flex items-start gap-18 pl-30">
        <div className="-mt-2 -mb-3 flex flex-col gap-[18px]">
          {[0, 1, 2, 3, 4, 5].map((n) => (
            <span key={n} className="size-6 rounded-full bg-[#4a7c84]" />
          ))}
        </div>
        <div className="my-12 flex h-30 items-center gap-5 rounded-[36px] bg-[#f8eedd] px-10 text-[#9e6b00]">
          <svg viewBox="0 0 42 60" className="h-15 w-[42px]" fill="none" stroke="currentColor" strokeLinecap="round" strokeLinejoin="round">
            <circle cx="24" cy="7" r="7" fill="currentColor" stroke="none" />
            <path d="M16 18H27L24 38L16 35Z" fill="currentColor" strokeWidth="3" />
            <path d="M17 19L7 26L3 34" strokeWidth="6" />
            <path d="M31 26L38 32" strokeWidth="6" />
            <path d="M19 36L29 43L30 56" strokeWidth="8" />
            <path d="M14 44L12 50L7 56" strokeWidth="7" />
          </svg>
          <span className="text-[54px] leading-[64px] font-bold">4 minutes</span>
        </div>
      </section>

      {/* departures */}
      <section className="grid">
        <div className="col-start-1 row-start-1 mx-12 mt-24 rounded-t-[48px] bg-linear-to-b from-[#ffb700] to-[#ffc400] shadow-[0_50px_60px_rgba(255,180,0,0.3)]" />
        <div className="col-start-1 row-start-1 min-w-0">
          <div className="-ml-[327px] flex gap-9">
            <button
              type="button"
              aria-label="Earlier departure"
              className="w-[387px] shrink-0 rounded-[52px] bg-linear-to-b from-[#ffd000] to-[#ffc600] shadow-[0_16px_60px_rgba(120,100,50,0.16)]"
            />
            <DepartureCard minutes={29} live />
            <DepartureCard minutes={32} live />
            <DepartureCard minutes={52} />
          </div>
          <div className="mx-24 mt-[46px] flex gap-5">
            <button type="button" aria-label="Alerts" className="flex h-30 w-[218px] items-start rounded-[44px] bg-linear-to-b from-[#ffd900] to-[#ffd000] pt-7 pl-14">
              <svg viewBox="0 0 32 60" className="h-15 w-8" fill="#000">
                <path d="M16 1Q19 1 22 6L30 40V58H2V40L10 6Q13 1 16 1Z" />
              </svg>
            </button>
            <button type="button" aria-label="Schedule" className="flex h-30 w-[221px] items-start rounded-[44px] bg-linear-to-b from-[#ffd900] to-[#ffd000] pt-7 pl-11">
              <svg viewBox="0 0 38 60" className="h-15 w-[38px]" fill="#000">
                <rect width="38" height="60" rx="3" />
              </svg>
            </button>
            <button type="button" aria-label="Directions" className="flex h-30 w-[265px] items-start rounded-[44px] bg-linear-to-b from-[#ffd900] to-[#ffd000] pt-7 pl-12">
              <svg viewBox="0 0 32 60" className="h-15 w-8" fill="#000">
                <circle cx="16" cy="18" r="16" />
              </svg>
            </button>
          </div>
        </div>
      </section>
    </main>
  );
};

export default App;
